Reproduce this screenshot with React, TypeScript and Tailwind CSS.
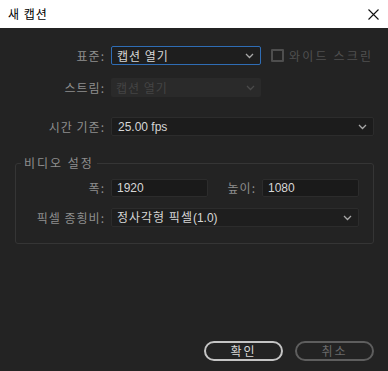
import React from "react";

const font = { fontFamily: '"Noto Sans CJK KR", "Noto Sans", sans-serif' };

function Chevron({ color = "#a8a8a8" }: { color?: string }) {
  return (
    <svg width="9" height="6" viewBox="0 0 9 6" className="shrink-0">
      <path d="M1 1 L4.5 4.5 L8 1" fill="none" stroke={color} strokeWidth="1.3" />
    </svg>
  );
}

function Label({ children, w = "w-[111px]" }: { children: React.ReactNode; w?: string }) {
  return (
    <div className={`${w} shrink-0 text-right pr-[6px] text-[12px] text-[#8e8e8e] tracking-[1px] leading-none`}>
      {children}
    </div>
  );
}

export default function App() {
  return (
    <div className="w-[388px] h-[371px] flex flex-col bg-[#232323] overflow-hidden" style={font}>
      {/* title bar */}
      <div className="h-[28px] bg-white flex items-center justify-between pl-[8px] pr-[9px] shrink-0">
        <span className="text-[12px] text-black tracking-[1px]">새 캡션</span>
        <svg width="11" height="11" viewBox="0 0 11 11">
          <path d="M0.5 0.5 L10.5 10.5 M10.5 0.5 L0.5 10.5" stroke="#111" strokeWidth="1.1" />
        </svg>
      </div>

      {/* row 1 */}
      <div className="flex items-center mt-[18px] h-[19px]">
        <Label>표준:</Label>
        <div className="w-[150px] h-[19px] box-border border border-[#2f6db5] rounded-[2px] bg-[#1e1e1e] flex items-center justify-between pl-[5px] pr-[6px]">
          <span className="text-[12px] text-[#d6d6d6] tracking-[1px] leading-none">캡션 열기</span>
          <Chevron />
        </div>
        <div className="ml-[10px] w-[13px] h-[13px] border-2 border-[#4e4e4e] rounded-[1px] box-border" />
        <span className="ml-[5px] text-[12px] text-[#505050] tracking-[2.2px] leading-none">와이드 스크린</span>
      </div>

      {/* row 2 */}
      <div className="flex items-center mt-[13px] h-[19px]">
        <Label>스트림:</Label>
        <div className="w-[150px] h-[19px] rounded-[2px] bg-[#2a2a2a] flex items-center justify-between pl-[5px] pr-[6px]">
          <span className="text-[12px] text-[#444444] tracking-[1px] leading-none">캡션 열기</span>
          <Chevron color="#4a4a4a" />
        </div>
      </div>

      {/* row 3 */}
      <div className="flex items-center mt-[20px] h-[19px]">
        <Label>시간 기준:</Label>
        <div className="w-[263px] h-[19px] box-border border border-[#2c2c2c] rounded-[2px] bg-[#1c1c1c] flex items-center justify-between pl-[6px] pr-[6px]">
          <span className="text-[12px] text-[#d6d6d6] leading-none" style={{ fontFamily: '"Liberation Sans", "Noto Sans CJK KR", sans-serif' }}>25.00 fps</span>
          <Chevron />
        </div>
      </div>

      {/* group */}
      <fieldset className="mt-[21px] ml-[15px] w-[359px] h-[87px] border border-[#353535] rounded-[3px] px-0 pt-0 pb-0 min-w-0">
        <legend className="ml-[5px] px-[3px] text-[12px] text-[#8e8e8e] tracking-[2px] leading-none">비디오 설정</legend>
        <div className="flex items-center mt-[10px] h-[18px]">
          <Label w="w-[95px]">폭:</Label>
          <div className="w-[97px] h-[18px] box-border border border-[#2c2c2c] rounded-[2px] bg-[#1a1a1a] flex items-center pl-[5px]">
            <span className="text-[12px] text-[#d6d6d6] leading-none" style={{ fontFamily: '"Liberation Sans", sans-serif' }}>1920</span>
          </div>
          <Label w="w-[54px]">높이:</Label>
          <div className="w-[97px] h-[18px] box-border border border-[#2c2c2c] rounded-[2px] bg-[#1a1a1a] flex items-center pl-[5px]">
            <span className="text-[12px] text-[#d6d6d6] leading-none" style={{ fontFamily: '"Liberation Sans", sans-serif' }}>1080</span>
          </div>
        </div>
        <div className="flex items-center mt-[11px] h-[19px]">
          <Label w="w-[95px]">픽셀 종횡비:</Label>
          <div className="w-[248px] h-[19px] box-border border border-[#2c2c2c] rounded-[2px] bg-[#1e1e1e] flex items-center justify-between pl-[5px] pr-[6px]">
            <span className="text-[12px] text-[#d6d6d6] tracking-[1px] leading-none">정사각형 픽셀<span style={{ fontFamily: '"Liberation Sans", sans-serif', letterSpacing: 0 }}>(1.0)</span></span>
            <Chevron />
          </div>
        </div>
      </fieldset>

      {/* buttons */}
      <div className="mt-auto mb-[10px] flex justify-end gap-[12px] pr-[14px]">
        <button className="w-[79px] h-[20px] box-border border-2 border-[#c4c4c4] rounded-full bg-[#232323] text-[12px] text-[#d8d8d8] tracking-[2px] leading-none flex items-center justify-center">
          확인
        </button>
        <button className="w-[79px] h-[20px] box-border border-2 border-[#5e5e5e] rounded-full bg-[#232323] text-[12px] text-[#6a6a6a] tracking-[2px] leading-none flex items-center justify-center">
          취소
        </button>
      </div>
    </div>
  );
}
